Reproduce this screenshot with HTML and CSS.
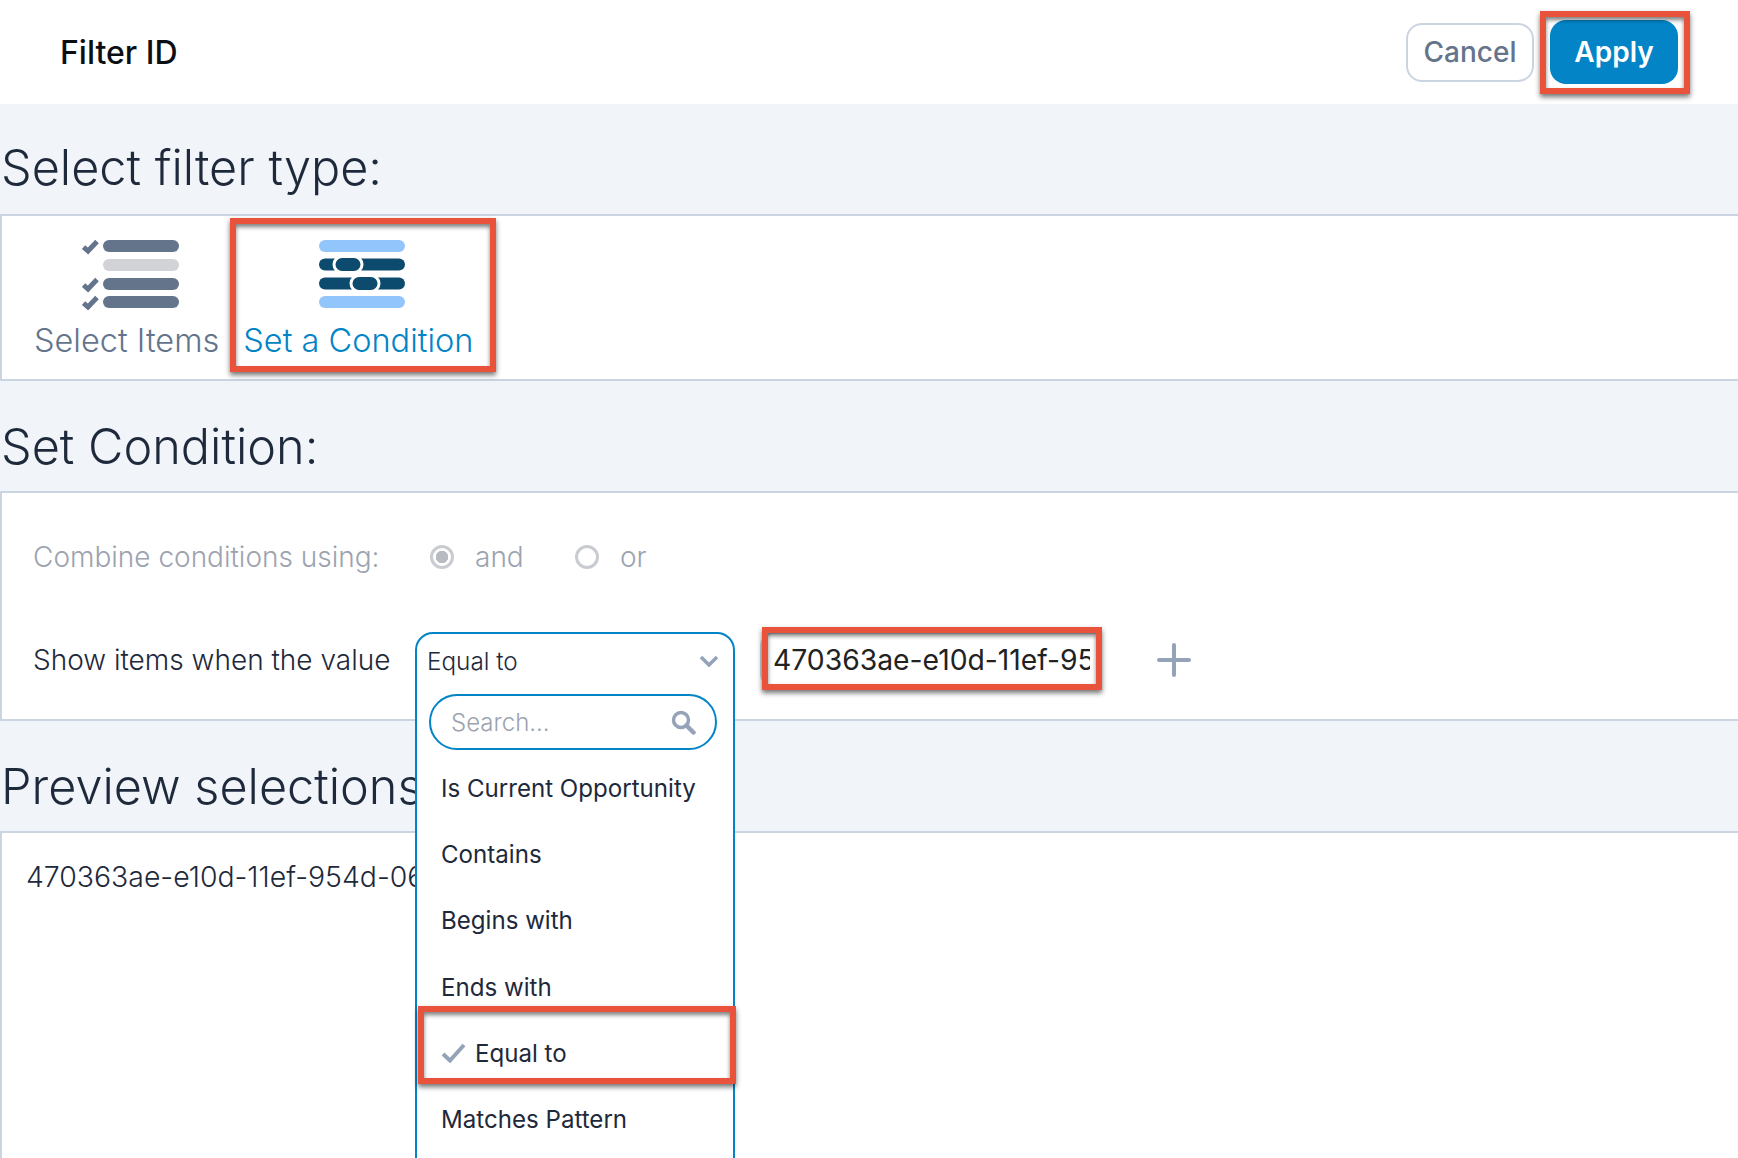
FILE: index.html
```html
<!DOCTYPE html>
<html lang="en">
<head>
<meta charset="utf-8">
<title>Filter ID</title>
<link rel="stylesheet" href="styles.css">
</head>
<body>
<div class="page">
  <header class="topbar">
    <h1 class="title">Filter ID</h1>
    <div class="actions">
      <button class="btn btn-cancel">Cancel</button>
      <div class="apply-wrap">
        <button class="btn btn-apply">Apply</button>
        <span class="hl hl-apply"></span>
      </div>
    </div>
  </header>

  <h2 class="section-title">Select filter type:</h2>
  <section class="panel type-panel">
    <div class="option">
      <svg class="icon icon-items" width="100" height="70" viewBox="0 0 100 70">
        <g fill="none" stroke="#64748b" stroke-width="5">
          <path d="M1.500 7l4.500 4L15 1.500"/>
          <path d="M1.500 45l4.500 4L15 39.500"/>
          <path d="M1.500 63l4.500 4L15 57.500"/>
        </g>
        <rect x="21" y="0" width="76" height="12" rx="6" fill="#64748b"/>
        <rect x="21" y="19" width="76" height="12" rx="6" fill="#d1d3d6"/>
        <rect x="21" y="38" width="76" height="12" rx="6" fill="#64748b"/>
        <rect x="21" y="56" width="76" height="12" rx="6" fill="#64748b"/>
      </svg>
      <span class="option-label">Select Items</span>
    </div>
    <div class="option option-active">
      <svg class="icon icon-cond" width="86" height="70" viewBox="0 0 86 70">
        <rect x="0" y="0" width="86" height="12" rx="6" fill="#93c5fd"/>
        <rect x="0" y="18.500" width="86" height="12" rx="6" fill="#0c4a6e"/>
        <rect x="15" y="16.500" width="28" height="16" rx="8" fill="#0c4a6e" stroke="#fff" stroke-width="3"/>
        <rect x="0" y="37.500" width="86" height="12" rx="6" fill="#0c4a6e"/>
        <rect x="32" y="35.500" width="28" height="16" rx="8" fill="#0c4a6e" stroke="#fff" stroke-width="3"/>
        <rect x="0" y="56" width="86" height="12" rx="6" fill="#93c5fd"/>
      </svg>
      <span class="option-label">Set a Condition</span>
      <span class="hl hl-option"></span>
    </div>
  </section>

  <h2 class="section-title">Set Condition:</h2>
  <section class="panel cond-panel">
    <div class="combine-row">
      <span class="combine-label">Combine conditions using:</span>
      <span class="radio radio-on"></span><span class="radio-text">and</span>
      <span class="radio radio-off"></span><span class="radio-text">or</span>
    </div>
    <div class="show-row">
      <span class="show-label">Show items when the value</span>
      <div class="select-slot">
        <div class="dropdown">
          <div class="dd-trigger">
            <span>Equal to</span>
            <svg class="dd-chevron" width="20" height="12" viewBox="0 0 20 12"><path d="M2 2l8 8 8-8" fill="none" stroke="#94a3b8" stroke-width="3.500"/></svg>
          </div>
          <div class="dd-search">
            <span>Search...</span>
            <svg width="26" height="26" viewBox="0 0 26 26"><circle cx="11" cy="11" r="7.500" fill="none" stroke="#94a3b8" stroke-width="3.500"/><path d="M16.500 16.500l7 7" stroke="#94a3b8" stroke-width="4.500" stroke-linecap="round"/></svg>
          </div>
          <ul class="dd-list">
            <li class="dd-item">Is Current Opportunity</li>
            <li class="dd-item">Contains</li>
            <li class="dd-item">Begins with</li>
            <li class="dd-item">Ends with</li>
            <li class="dd-item dd-selected">
              <svg class="dd-check" width="25" height="20" viewBox="0 0 25 20"><path d="M2 11l7 6.500L23 2" fill="none" stroke="#94a3b8" stroke-width="4"/></svg>
              <span>Equal to</span>
              <span class="hl hl-item"></span>
            </li>
            <li class="dd-item">Matches Pattern</li>
          </ul>
        </div>
      </div>
      <div class="value-wrap">
        <input class="value-input" type="text" value="470363ae-e10d-11ef-954d-06ad">
        <span class="hl hl-value"></span>
      </div>
      <svg class="plus" width="34" height="34" viewBox="0 0 34 34"><path d="M17 2v30M2 17h30" stroke="#94a3b8" stroke-width="4" stroke-linecap="round"/></svg>
    </div>
  </section>

  <h2 class="section-title">Preview selections:</h2>
  <section class="panel preview-panel">
    <p class="preview-text">470363ae-e10d-11ef-954d-06ad</p>
  </section>
</div>
</body>
</html>
```
FILE: styles.css
```css
* { box-sizing: border-box; }
html, body { margin: 0; padding: 0; height: 100%; overflow: hidden; }
body { font-family: Inter, "Liberation Sans", sans-serif; background: #f1f4f9; color: #1e293b; }
.page { display: flex; flex-direction: column; height: 1158px; overflow: hidden; }

.topbar { height: 104px; flex: none; background: #fff; display: flex; align-items: center; justify-content: space-between; padding: 0 60px 0 60px; }
.title { margin: 0; font-size: 32px; font-weight: 500; color: #0b0f14; }
.actions { display: flex; align-items: center; gap: 16px; }
.btn { width: 128px; font-family: inherit; font-size: 28px; border-radius: 16px; padding: 0; }
.btn-cancel { height: 59px; background: #fff; border: 2px solid #cbd5e1; color: #64748b; font-weight: 500; }
.btn-apply { display: block; height: 64px; background: #0284c7; border: 0; color: #fff; font-weight: 600; }
.apply-wrap { position: relative; }

.hl { position: absolute; border: 6px solid #e9533b; box-shadow: 0 3px 5px rgba(0,0,0,.55), inset 0 3px 4px rgba(0,0,0,.5); pointer-events: none; }
.hl-apply { left: -10px; right: -12px; top: -9px; bottom: -10px; }
.hl-option { left: -13px; right: -23px; top: -22px; bottom: -12px; }
.hl-value { left: 2px; right: -4px; top: -5px; bottom: -2px; }
.hl-item { left: 1px; right: -3px; top: -14px; bottom: 2px; }

.section-title { margin: 0; height: 110px; flex: none; display: flex; align-items: center; padding: 23px 0 0 1px; font-size: 48.600px; font-weight: 300; color: #1e293b; line-height: 1; }
.section-title:first-of-type { padding-top: 18px; }
.panel { background: #fff; border: 2px solid #cbd5e1; border-right: 0; flex: none; }

.type-panel { display: flex; gap: 24px; padding: 24px 0 19px 32px; height: 167px; }
.option { position: relative; display: flex; flex-direction: column; align-items: center; color: #64748b; }
.option-active { color: #0284c7; }
.icon { display: block; flex: none; }
.icon-items { margin-left: 10px; }
.icon-cond { margin-left: 8px; }
.option-label { margin-top: 11px; font-size: 32.500px; font-weight: 300; line-height: 40px; white-space: nowrap; }

.cond-panel { height: 230px; padding: 39px 0 0 31px; }
.combine-row { display: flex; align-items: center; height: 50px; font-size: 28px; font-weight: 300; color: #9ca3af; }
.combine-label { width: 397px; flex: none; }
.radio { width: 24px; height: 24px; border: 3px solid #c8ccd0; border-radius: 50%; flex: none; background: #fff; }
.radio-on { background: radial-gradient(circle, #b8bcc2 0 6px, #fff 6.500px); }
.radio-text { margin-left: 21px; width: 100px; flex: none; }

.show-row { display: flex; align-items: center; height: 56px; margin-top: 50px; }
.show-label { width: 382px; flex: none; font-size: 28px; font-weight: 300; color: #1e293b; white-space: nowrap; }
.select-slot { position: relative; width: 320px; height: 56px; flex: none; }
.dropdown { position: absolute; left: 0; top: 0; width: 320px; height: 600px; background: #fff; border: 2px solid #0284c7; border-radius: 18px 18px 0 0; z-index: 2; }
.dd-trigger { height: 53px; padding: 0 14px 0 10px; display: flex; align-items: center; justify-content: space-between; font-size: 24.300px; font-weight: 300; color: #1e293b; }
.dd-search { margin: 7px 16px 0 12px; height: 56px; border: 2px solid #0284c7; border-radius: 28px; display: flex; align-items: center; justify-content: space-between; padding: 0 19px 0 20px; font-size: 24px; font-weight: 300; color: #9ca3af; }
.dd-list { list-style: none; margin: 5px 0 0; padding: 0; }
.dd-item { position: relative; height: 66.300px; padding-left: 24px; display: flex; align-items: center; font-size: 24.100px; font-weight: 400; color: #1e293b; }
.dd-check { margin-right: 9px; }

.value-wrap { position: relative; width: 338px; height: 56px; margin-left: 25px; flex: none; }
.value-input { display: block; width: 100%; height: 100%; padding: 0 8px 0 11px; border: 2px solid #cbd5e1; border-right: 0; border-radius: 14px 0 0 14px; background: #fff; font-family: inherit; font-size: 28.300px; color: #222; outline: 0; }
.plus { margin-left: 59px; flex: none; }

.preview-panel { flex: 1; border-bottom: 0; padding: 24px 0 0 24px; }
.preview-text { margin: 0; font-size: 28.400px; font-weight: 300; line-height: 40px; color: #1e293b; white-space: nowrap; }
```
